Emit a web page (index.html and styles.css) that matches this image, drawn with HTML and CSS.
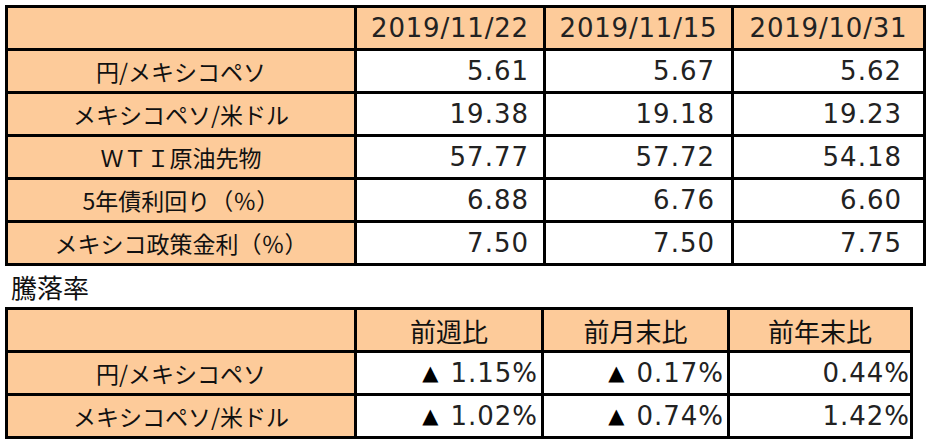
FILE: index.html
```html
<!DOCTYPE html>
<html lang="ja">
<head>
<meta charset="utf-8">
<title>メキシコペソ</title>
<link rel="stylesheet" href="styles.css">
</head>
<body>
<div class="sheet">
  <div class="grid grid-top">
    <div class="cell hd"></div>
    <div class="cell hd date">2019/11/22</div>
    <div class="cell hd date">2019/11/15</div>
    <div class="cell hd date">2019/10/31</div>

    <div class="cell lab">円/メキシコペソ</div>
    <div class="cell num c2">5.61</div>
    <div class="cell num c3">5.67</div>
    <div class="cell num c4">5.62</div>

    <div class="cell lab">メキシコペソ/米ドル</div>
    <div class="cell num c2">19.38</div>
    <div class="cell num c3">19.18</div>
    <div class="cell num c4">19.23</div>

    <div class="cell lab">ＷＴＩ原油先物</div>
    <div class="cell num c2">57.77</div>
    <div class="cell num c3">57.72</div>
    <div class="cell num c4">54.18</div>

    <div class="cell lab">5年債利回り（％）</div>
    <div class="cell num c2">6.88</div>
    <div class="cell num c3">6.76</div>
    <div class="cell num c4">6.60</div>

    <div class="cell lab">メキシコ政策金利（％）</div>
    <div class="cell num c2">7.50</div>
    <div class="cell num c3">7.50</div>
    <div class="cell num c4">7.75</div>
  </div>

  <div class="caption">騰落率</div>

  <div class="grid grid-bottom">
    <div class="cell hd"></div>
    <div class="cell hd jp">前週比</div>
    <div class="cell hd jp">前月末比</div>
    <div class="cell hd jp">前年末比</div>

    <div class="cell lab">円/メキシコペソ</div>
    <div class="cell num b2"><span class="tri">▲</span>1.15%</div>
    <div class="cell num b3"><span class="tri">▲</span>0.17%</div>
    <div class="cell num b4">0.44%</div>

    <div class="cell lab">メキシコペソ/米ドル</div>
    <div class="cell num b2"><span class="tri">▲</span>1.02%</div>
    <div class="cell num b3"><span class="tri">▲</span>0.74%</div>
    <div class="cell num b4">1.42%</div>
  </div>
</div>
</body>
</html>
```

FILE: styles.css
```css
html, body {
  margin: 0;
  padding: 0;
  background: #ffffff;
}

body {
  color: #111111;
  font-family: "Noto Sans CJK JP", "Noto Sans", sans-serif;
}

.sheet {
  padding: 5px;
  display: flex;
  flex-direction: column;
  align-items: flex-start;
}

.grid {
  display: grid;
  grid-auto-rows: 40px;
  gap: 3px;
  padding: 3px;
  background: #000000;
}

.grid-top {
  grid-template-columns: 346px 186px 185px 189px;
}

.grid-bottom {
  grid-template-columns: 346px 184px 183px 180px;
}

.cell {
  display: flex;
  align-items: center;
  background: #ffffff;
  white-space: nowrap;
  overflow: hidden;
}

.hd {
  background: #fdcb9a;
  justify-content: center;
}

.date {
  font-family: "DejaVu Sans", "Noto Sans", sans-serif;
  font-size: 26px;
  letter-spacing: 0.8px;
  color: #222222;
}

.jp {
  font-size: 26px;
}

.lab {
  background: #fdcb9a;
  justify-content: center;
  font-size: 23px;
}

.num {
  justify-content: flex-end;
  font-family: "DejaVu Sans", "Noto Sans", sans-serif;
  font-size: 26px;
  letter-spacing: 1px;
  color: #222222;
}

.c2 { padding-right: 14px; }
.c3 { padding-right: 16px; }
.c4 { padding-right: 21px; }

.b2 { padding-right: 3px; }
.b3 { padding-right: 3px; }
.b4 { padding-right: 0; }

.tri {
  font-size: 21px;
  margin-right: 12px;
  letter-spacing: 0;
  color: #000000;
}

.caption {
  height: 41px;
  display: flex;
  align-items: center;
  padding-left: 6px;
  font-size: 26px;
}
```
